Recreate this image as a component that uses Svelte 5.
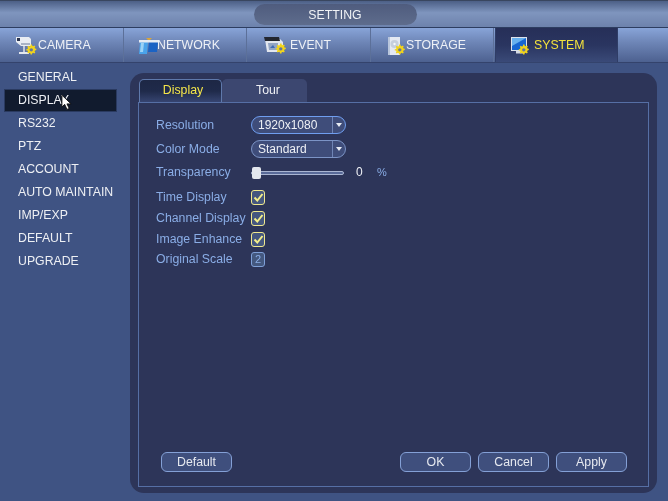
<script>
  const tabs = [
    { id: 'camera', label: 'CAMERA' },
    { id: 'network', label: 'NETWORK' },
    { id: 'event', label: 'EVENT' },
    { id: 'storage', label: 'STORAGE' },
    { id: 'system', label: 'SYSTEM' }
  ];
  const menu = ['GENERAL', 'DISPLAY', 'RS232', 'PTZ', 'ACCOUNT', 'AUTO MAINTAIN', 'IMP/EXP', 'DEFAULT', 'UPGRADE'];
  const checks = ['Time Display', 'Channel Display', 'Image Enhance'];
  const gear = 'M6 0.5h1.6l.3 1.5 1.2.5 1.3-.8 1.1 1.1-.8 1.3.5 1.2 1.500.3v1.600l-1.500.3-.5 1.200.8 1.300-1.100 1.100-1.300-.8-1.200.5-.3 1.500H6l-.3-1.500-1.200-.5-1.300.8-1.100-1.100.8-1.300-.5-1.200L.9 7.700V6.100l1.500-.3.5-1.200-.8-1.300 1.100-1.100 1.300.8 1.200-.5z';
  const gearPos = {
    camera: 'translate(10.500 10) scale(.85)',
    event: 'translate(14 9) scale(.85)',
    storage: 'translate(9 10) scale(.85)',
    system: 'translate(9 10) scale(.85)'
  };
</script>

<div class="screen">
  <header class="titlebar">
    <div class="title">SETTING</div>
  </header>

  <nav class="topnav">
    {#each tabs as tab}
      <div class="navitem {tab.id}" class:active={tab.id === 'system'}>
        <svg class="navicon" width="26" height="22" viewBox="0 0 26 22">
          {#if tab.id === 'camera'}
            <path d="M1 3h13l2 2v7H6L1 8z" fill="#e9edf3" />
            <rect x="2" y="4" width="3" height="3" fill="#2c3650" />
            <path d="M6 9h9v2H6z" fill="#aab4c6" />
            <path d="M8 12h2v6H8z" fill="#c3cad6" />
            <path d="M4 18h10v2H4z" fill="#e3e7ee" />
          {:else if tab.id === 'network'}
            <path d="M2 8h8l-1 12H1z" fill="#4aa3ea" />
            <path d="M3 9h3l-1 9H2z" fill="#9bd2f5" />
            <path d="M11 8h9l-1 10h-9z" fill="#1b63c4" />
            <path d="M1 6h20v2.500H1z" fill="#e6ebf2" />
            <path d="M8 4h6l-2 2h-2z" fill="#d9a53a" />
          {:else if tab.id === 'event'}
            <path d="M4 5h15l3 3v10H6z" fill="#e2e6ee" />
            <path d="M3 3h15l1 4H4z" fill="#23262f" />
            <path d="M7 9h10v7H8z" fill="#93a5c4" />
            <path d="M9 14l3-3 2 3z" fill="#3f6bb5" />
          {:else if tab.id === 'storage'}
            <path d="M3 3h12v18H3z" fill="#e4e9f2" />
            <path d="M3 3h2v18H3z" fill="#b9c6dc" />
            <circle cx="9.500" cy="10" r="4" fill="#c6cfdd" />
            <circle cx="9.500" cy="10" r="1.200" fill="#f5f7fa" />
          {:else}
            <rect x="2" y="3" width="16" height="14" fill="#dde3ec" />
            <rect x="3" y="4" width="14" height="12" fill="#1766d2" />
            <path d="M3 4h14L3 12z" fill="#67b0ee" />
            <path d="M7 17h8v2.500H7z" fill="#d3d9e3" />
          {/if}
          {#if gearPos[tab.id]}
            <g transform={gearPos[tab.id]}><path d={gear} fill="#f2d41a" /><circle cx="6.800" cy="6.900" r="2" fill="#66769a" /></g>
          {/if}
        </svg>
        <span>{tab.label}</span>
      </div>
    {/each}
  </nav>

  <div class="body">
    <aside class="sidebar">
      {#each menu as item}
        <div class="menuitem" class:selected={item === 'DISPLAY'}>{item}</div>
      {/each}
    </aside>

    <main class="panel">
      <div class="tabs">
        <div class="tab current">Display</div>
        <div class="tab other">Tour</div>
      </div>
      <div class="frame">
        <div class="form">
          <div class="row first">
            <span class="label">Resolution</span>
            <div class="select focus"><span class="value">1920x1080</span><span class="arrow"></span></div>
          </div>
          <div class="row second">
            <span class="label">Color Mode</span>
            <div class="select"><span class="value">Standard</span><span class="arrow"></span></div>
          </div>
          <div class="row third">
            <span class="label">Transparency</span>
            <div class="slider"><span class="thumb"></span></div>
            <span class="num">0</span>
            <span class="unit">%</span>
          </div>
          <div class="checks">
            {#each checks as c}
              <div class="row check-row">
                <span class="label">{c}</span>
                <span class="check">
                  <svg width="11" height="11" viewBox="0 0 11 11"><path d="M1.500 5.500l2.800 3L9.500 2" fill="none" stroke="#f3ee8a" stroke-width="2" /></svg>
                </span>
              </div>
            {/each}
            <div class="row check-row last">
              <span class="label">Original Scale</span>
              <span class="check plain">2</span>
            </div>
          </div>
        </div>

        <div class="actions">
          <button class="btn">Default</button>
          <div class="right">
            <button class="btn">OK</button>
            <button class="btn">Cancel</button>
            <button class="btn">Apply</button>
          </div>
        </div>
      </div>
    </main>
  </div>

  <svg class="cursor" width="11" height="17" viewBox="0 0 12 18">
    <path d="M1 1v13l3-3 2.500 5.500 2.500-1L6.500 10.500H11z" fill="#fff" stroke="#111" stroke-width="1" />
  </svg>
</div>

<style>
  :global(body) {
    margin: 0;
    background: #3f5383;
  }

  .screen {
    position: relative;
    width: 668px;
    height: 501px;
    overflow: hidden;
    background: #3f5383;
    font-family: "Liberation Sans", Arial, sans-serif;
    font-size: 12.3px;
    filter: blur(0.35px);
  }

  .titlebar {
    height: 28px;
    box-sizing: border-box;
    padding-top: 3px;
    display: flex;
    justify-content: center;
    background: linear-gradient(#4c5f86 0, #7f95be 45%, #6d82ac 100%);
    border-top: 1px solid #39465f;
    border-bottom: 1px solid #2d3d60;
  }

  .title {
    width: 163px;
    height: 21px;
    margin-left: 2px;
    border-radius: 11px;
    background: linear-gradient(#4f5c7e, #5e6c8c);
    color: #f1f3f6;
    text-align: center;
    line-height: 22px;
  }

  .topnav {
    height: 35px;
    box-sizing: border-box;
    display: flex;
    background: linear-gradient(#88a4d8 0, #6f87b8 40%, #4d6190 100%);
    border-bottom: 1px solid #34436c;
  }

  .navitem {
    width: 123.5px;
    display: flex;
    align-items: center;
    box-sizing: border-box;
    color: #eef1f6;
    border-right: 1px solid #5c7099;
  }

  .navitem.camera { padding-left: 15px; }
  .navitem.camera span { margin-left: -3px; }
  .navitem.network { padding-left: 14.5px; }
  .navitem.network span { margin-left: -7px; }
  .navitem.event { padding-left: 14px; }
  .navitem.event span { margin-left: 3px; }
  .navitem.storage { padding-left: 14.5px; }
  .navitem.storage span { margin-left: -5px; }

  .navitem.active {
    width: 123px;
    margin-left: 1px;
    padding-left: 13px;
    color: #f3e23c;
    background: linear-gradient(#262f58 0, #2a3560 50%, #3a4a78 100%);
    border-right: 1px solid #2f3d66;
    border-left: 1px solid #2f3d66;
  }

  .navitem.active span { margin-left: -1px; }

  .navicon {
    flex: none;
  }

  .body {
    display: flex;
    padding-top: 3px;
  }

  .sidebar {
    width: 130px;
    flex: none;
    box-sizing: border-box;
    padding: 0 13px 0 4px;
  }

  .menuitem {
    height: 23px;
    line-height: 22px;
    padding-left: 14px;
    color: #eef0f4;
    box-sizing: border-box;
    white-space: nowrap;
  }

  .menuitem.selected {
    background: #111b2e;
    border: 1px solid #2a3a60;
    padding-left: 13px;
    line-height: 20px;
  }

  .panel {
    width: 527px;
    height: 420px;
    margin-top: 7px;
    box-sizing: border-box;
    background: #2d3559;
    border-radius: 14px;
    padding: 6px 8px 6px 8px;
    display: flex;
    flex-direction: column;
  }

  .tabs {
    display: flex;
    height: 23px;
    padding-left: 1px;
    flex: none;
  }

  .tab {
    width: 85px;
    box-sizing: border-box;
    text-align: center;
    line-height: 23px;
    color: #eef0f5;
    background: #3c4770;
    border-radius: 5px 5px 0 0;
  }

  .tab.other {
    padding-left: 7px;
  }

  .tab.current {
    width: 83px;
    padding-left: 5px;
    line-height: 21px;
    color: #f5e64a;
    background: linear-gradient(#1d2745 0, #1f2a4a 50%, #364470 100%);
    border: 1px solid #5f79ab;
    border-bottom: none;
  }

  .frame {
    flex: 1;
    border: 1px solid #566fa5;
    display: flex;
    flex-direction: column;
    justify-content: space-between;
    box-sizing: border-box;
    min-height: 0;
  }

  .form {
    padding: 12px 0 0 17px;
  }

  .row {
    display: flex;
    align-items: center;
    height: 20px;
  }

  .second { margin-top: 4px; }
  .third { margin-top: 3px; }
  .last { margin-top: -1px; }

  .label {
    width: 95px;
    flex: none;
    color: #8aade6;
    white-space: nowrap;
  }

  .select {
    width: 95px;
    height: 18px;
    box-sizing: border-box;
    border: 1px solid #7c94c6;
    border-radius: 9px;
    background: #3f4d7a;
    display: flex;
    align-items: center;
    color: #eef0f5;
    font-size: 12px;
  }

  .select.focus {
    border-color: #6f9ef0;
  }

  .value {
    flex: 1;
    padding-left: 6px;
  }

  .arrow {
    width: 12px;
    height: 16px;
    border-left: 1px solid #6f84b5;
    position: relative;
  }

  .arrow::after {
    content: "";
    position: absolute;
    left: 3px;
    top: 6px;
    border: 3px solid transparent;
    border-top: 4px solid #e8ecf4;
    border-bottom: none;
  }

  .slider {
    position: relative;
    width: 93px;
    height: 4px;
    background: #596a98;
    border: 1px solid #aab6d2;
    box-sizing: border-box;
    border-radius: 2px;
    margin-top: 2px;
  }

  .thumb {
    position: absolute;
    left: 0;
    top: -5px;
    width: 9px;
    height: 12px;
    background: #e3e7ee;
    border-radius: 2px;
  }

  .num {
    width: 17px;
    margin-left: 12px;
    color: #eef0f5;
    font-size: 12px;
  }

  .unit {
    color: #8aade6;
    font-size: 11px;
    margin-left: 4px;
  }

  .checks {
    margin-top: 5px;
    display: flex;
    flex-direction: column;
    gap: 1px;
  }

  .check {
    width: 14px;
    height: 15px;
    box-sizing: border-box;
    border: 1px solid #f0e98e;
    border-radius: 3px;
    background: #45577f;
    display: flex;
    align-items: center;
    justify-content: center;
  }

  .check.plain {
    border-color: #7fa0d8;
    color: #8aade6;
    background: #44587f;
    font-size: 11px;
  }

  .actions {
    display: flex;
    justify-content: space-between;
    padding: 0 21px 14px 22px;
  }

  .right {
    display: flex;
    gap: 7px;
  }

  .btn {
    width: 71px;
    height: 20px;
    padding: 0;
    border: 1px solid #84a0d6;
    border-radius: 6px;
    background: #3f4f7d;
    color: #e6e9f0;
    font-family: inherit;
    font-size: 12.3px;
  }

  .cursor {
    position: absolute;
    left: 61px;
    top: 94px;
  }
</style>
